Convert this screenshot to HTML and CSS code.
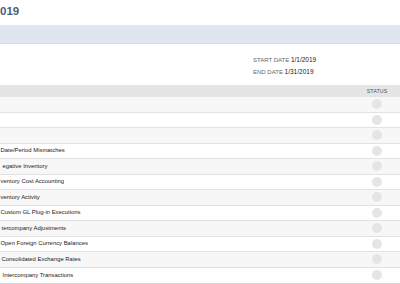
FILE: index.html
```html
<!DOCTYPE html>
<html lang="en">
<head>
    <meta charset="UTF-8">
    <meta name="viewport" content="width=device-width, initial-scale=1.0">
    <title>Period Close Checklist</title>
    <link rel="stylesheet" href="styles.css">
</head>
<body>
    <div class="page">
        <header class="page-title">
            <h1>019</h1>
        </header>

        <div class="band"></div>

        <div class="period">
            <div class="period-dates">
                <div class="period-line"><span class="label">START DATE</span> <span class="value">1/1/2019</span></div>
                <div class="period-line"><span class="label">END DATE</span> <span class="value">1/31/2019</span></div>
            </div>
        </div>

        <div class="checklist">
            <div class="checklist-head">
                <div class="col-task"></div>
                <div class="col-status">STATUS</div>
            </div>
            <div class="task-row"><div class="col-task"></div><div class="col-status"><span class="dot"></span></div></div>
            <div class="task-row"><div class="col-task"></div><div class="col-status"><span class="dot"></span></div></div>
            <div class="task-row"><div class="col-task"></div><div class="col-status"><span class="dot"></span></div></div>
            <div class="task-row"><div class="col-task">Date/Period Mismatches</div><div class="col-status"><span class="dot"></span></div></div>
            <div class="task-row"><div class="col-task indent-2">egative Inventory</div><div class="col-status"><span class="dot"></span></div></div>
            <div class="task-row"><div class="col-task">ventory Cost Accounting</div><div class="col-status"><span class="dot"></span></div></div>
            <div class="task-row"><div class="col-task">ventory Activity</div><div class="col-status"><span class="dot"></span></div></div>
            <div class="task-row"><div class="col-task">Custom GL Plug-in Executions</div><div class="col-status"><span class="dot"></span></div></div>
            <div class="task-row"><div class="col-task indent-1">tercompany Adjustments</div><div class="col-status"><span class="dot"></span></div></div>
            <div class="task-row"><div class="col-task">Open Foreign Currency Balances</div><div class="col-status"><span class="dot"></span></div></div>
            <div class="task-row"><div class="col-task indent-1">Consolidated Exchange Rates</div><div class="col-status"><span class="dot"></span></div></div>
            <div class="task-row"><div class="col-task indent-2">Intercompany Transactions</div><div class="col-status"><span class="dot"></span></div></div>
        </div>
    </div>
</body>
</html>
```

FILE: styles.css
```css
/* Base */
* {
    margin: 0;
    padding: 0;
    box-sizing: border-box;
}

body {
    font-family: 'Liberation Sans', Arial, sans-serif;
    background-color: #fff;
    color: #333;
}

.page {
    width: 400px;
    overflow: hidden;
}

/* Title */
.page-title {
    height: 25px;
    padding-top: 3px;
}

.page-title h1 {
    font-size: 11.5px;
    line-height: 16px;
    font-weight: bold;
    color: #4b5d7b;
}

.band {
    height: 19px;
    background-color: #dfe6ef;
    border-bottom: 1px solid #d2dae5;
}

/* Period */
.period {
    display: flex;
    justify-content: flex-end;
    padding: 10px 55px 7px 0;
}

.period-dates {
    width: 92px;
}

.period-line {
    font-size: 6px;
    line-height: 12px;
    white-space: nowrap;
}

.period-line .label {
    font-size: 6px;
    color: #666;
}

.period-line .value {
    font-size: 6.5px;
    color: #222;
}

/* Checklist */
.checklist {
    border-bottom: 1px solid #d8d8d8;
}

.checklist-head,
.task-row {
    display: flex;
    align-items: center;
}

.checklist-head {
    height: 12px;
    background-color: #e5e5e5;
    font-size: 5.4px;
    color: #555;
}

.task-row {
    height: 15.5px;
    border-bottom: 1px solid #e2e2e2;
    font-size: 5.9px;
    color: #222;
    padding-bottom: 1px;
}

.task-row:nth-child(even) {
    background-color: #f7f7f7;
}

.task-row:last-child {
    border-bottom: none;
}

.col-task {
    flex: 1;
    white-space: nowrap;
    padding-left: 0.5px;
}

.col-task.indent-1 {
    padding-left: 1.5px;
}

.col-task.indent-2 {
    padding-left: 2.5px;
}

.col-status {
    width: 46px;
    display: flex;
    justify-content: center;
}

.dot {
    display: block;
    width: 10px;
    height: 10px;
    border-radius: 50%;
    background-color: #e5e5e5;
    margin-top: 1px;
}
```
